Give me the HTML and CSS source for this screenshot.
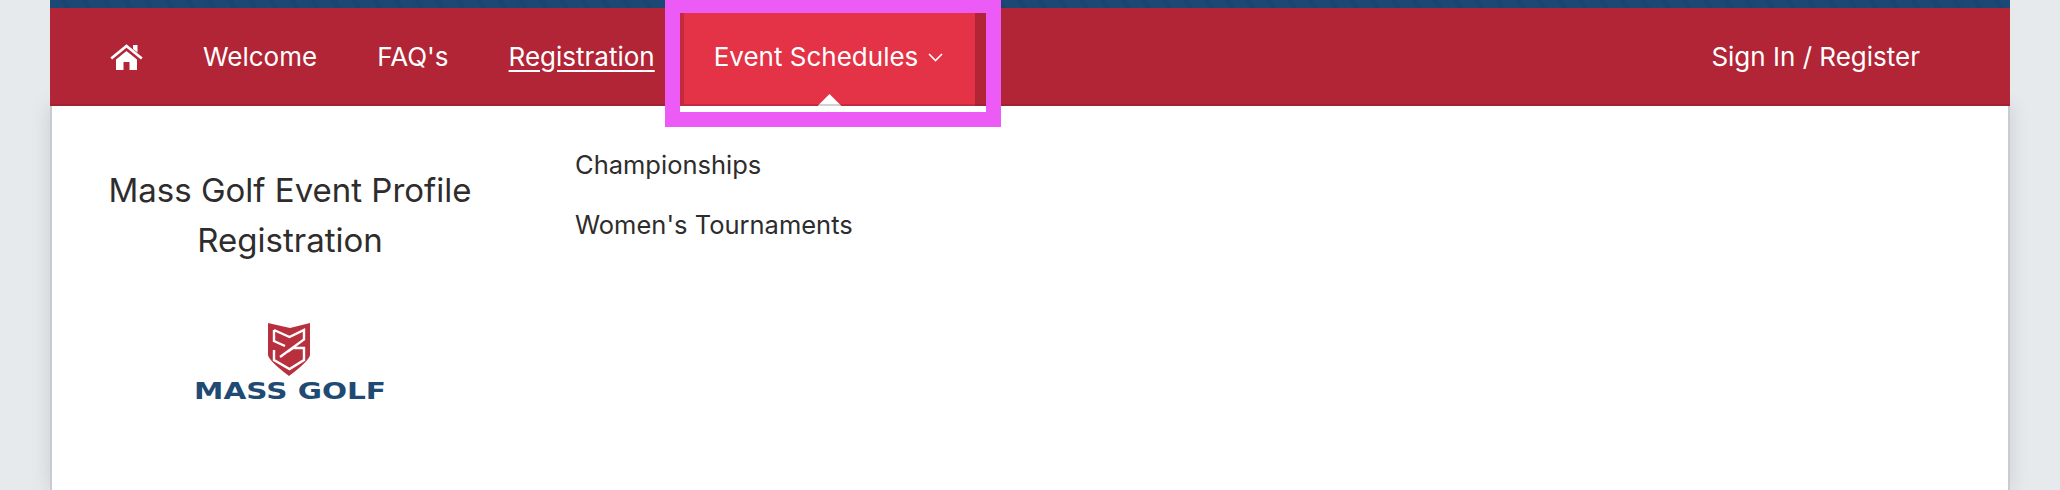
FILE: index.html
```html
<!DOCTYPE html>
<html lang="en">
<head>
<meta charset="utf-8">
<title>Mass Golf Event Profile Registration</title>
<link rel="stylesheet" href="styles.css">
</head>
<body>
<div class="page">
  <div class="topbar"></div>
  <nav class="nav">
    <div class="nav-left">
      <a class="nav-link home" href="#" aria-label="Home">
        <svg class="home-icon" viewBox="0 0 33 26" width="33" height="26">
          <path d="M23 1h4.500v7.500L23 5z" fill="#fff"/>
          <path d="M1.200 14.500L16.500 2l15.300 12.500" fill="none" stroke="#fff" stroke-width="2.800"/>
          <path d="M6 15.500L16.500 7 27 15.500V26h-7.500v-8h-6v8H6z" fill="#fff"/>
        </svg>
      </a>
      <a class="nav-link" href="#">Welcome</a>
      <a class="nav-link" href="#">FAQ's</a>
      <a class="nav-link current" href="#">Registration</a>
      <a class="nav-link active" href="#">Event Schedules
        <svg class="chevron" viewBox="0 0 15 9" width="15" height="9"><path d="M1 1l6.500 6.500L14 1" fill="none" stroke="#fff" stroke-width="1.600"/></svg>
        <span class="highlight"></span>
      </a>
    </div>
    <a class="nav-link signin" href="#">Sign In / Register</a>
  </nav>
  <main class="panel">
    <section class="intro">
      <h2 class="intro-title">Mass Golf Event Profile Registration</h2>
      <svg class="logo" viewBox="0 0 192 86" width="192" height="86">
        <path d="M74 0l22 5 20-5v32q-1 6-21 21Q75 38 74 32z" fill="#b8303d"/>
        <path d="M80 7L95.500 14l14.500-7v9.500L86 34M80 7v11l11 5M80 27v10l15.500 9L110 37V25H99l-5 3.500" fill="none" stroke="#fff" stroke-width="2.400"/>
        <text class="logo-text" x="0" y="76" textLength="192" lengthAdjust="spacingAndGlyphs">MASS GOLF</text>
      </svg>
    </section>
    <ul class="menu">
      <li><a href="#">Championships</a></li>
      <li><a href="#">Women's Tournaments</a></li>
    </ul>
  </main>
</div>
</body>
</html>
```
FILE: styles.css
```css
* { box-sizing: border-box; }
html, body { margin: 0; height: 100%; overflow: hidden; }
body {
  background: #e6eaed;
  font-family: "Inter", "Liberation Sans", sans-serif;
  color: #2e2c2c;
}
.page { width: 1960px; margin-left: 50px; }
.topbar {
  height: 8px;
  background: repeating-linear-gradient(60deg, #1c4876 0 13px, #1a4472 13px 18px);
}
.nav {
  height: 98px;
  background: #b22536;
  border-bottom: 2px solid #9f2330;
  display: flex;
  justify-content: space-between;
  position: relative;
  z-index: 2;
}
.nav-left { display: flex; padding-left: 60px; }
.nav-link {
  color: #fff;
  text-decoration: none;
  font-size: 26px;
  display: flex;
  align-items: center;
  gap: 10px;
  margin-right: 60px;
  height: 96px;
}
.home-icon { display: block; margin-top: 2px; }
.nav-link.current { text-decoration: underline; text-underline-offset: 4px; margin-right: 25px; }
.nav-link.active {
  position: relative;
  height: 98px;
  padding: 0 32px 0 30px;
  margin-right: 0;
  background: #e43246;
  border-left: 4px solid #c32a3b;
  border-bottom: 2px solid #c22d3e;
}
.nav-link.active::after {
  content: "";
  position: absolute;
  left: 50%;
  bottom: -2px;
  width: 24px;
  height: 12px;
  margin-left: -12px;
  background: linear-gradient(#fff 0 10px, #d2d2d2 10px);
  clip-path: polygon(50% 0, 100% 100%, 0 100%);
}
.chevron { display: block; margin-top: 2px; }
.highlight {
  position: absolute;
  top: -8px;
  left: -19px;
  right: -26px;
  height: 127px;
  border: solid #ec5bf6;
  border-width: 13px 15px 15px;
  pointer-events: none;
}
.signin { margin-right: 90px; }
.panel {
  background: #fff;
  border: solid #c9cbce;
  border-width: 0 2px;
  box-shadow: 0 0 18px rgba(70, 80, 90, 0.18);
  height: 384px;
  display: flex;
  position: relative;
}
.intro {
  width: 476px;
  padding-top: 59px;
  text-align: center;
  display: flex;
  flex-direction: column;
  align-items: center;
}
.intro-title {
  margin: 0;
  width: 400px;
  font-size: 33px;
  font-weight: 400;
  line-height: 50px;
}
.logo { display: block; margin-top: 58px; }
.logo-text {
  font-family: "DejaVu Sans", sans-serif;
  font-size: 23px;
  font-weight: 700;
  fill: #1e4a73;
}
.menu {
  list-style: none;
  margin: 0;
  padding: 0 0 0 47px;
}
.menu li { height: 60px; padding-top: 43px; line-height: 32px; }
.menu a { color: #2e2c2c; text-decoration: none; font-size: 25.500px; }
```
